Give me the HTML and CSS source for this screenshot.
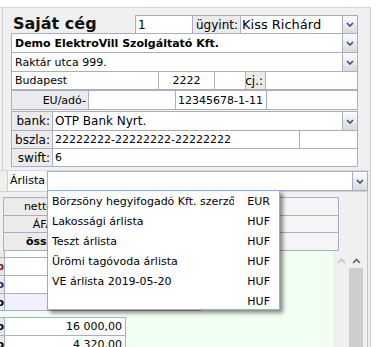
FILE: index.html
```html
<!DOCTYPE html>
<html lang="hu">

<head>
    <meta charset="UTF-8">
    <meta name="viewport" content="width=device-width, initial-scale=1.0">
    <title>Saját cég</title>
    <link rel="stylesheet" href="styles.css">
</head>
<body>
    <div class="app">
        <div class="partner">
            <div class="row h19">
                <div class="title">Saját cég</div>
                <div class="cell c-no">1</div>
                <div class="cell lbl c-agent-lbl">ügyint:</div>
                <div class="cell c-agent">Kiss Richárd</div>
                <div class="cell drop"><svg class="chev" viewBox="0 0 8 5" width="8" height="5"><path d="M1 1l3 3 3-3"/></svg></div>
            </div>
            <div class="row h20">
                <div class="cell c-line strong">Demo ElektroVill Szolgáltató Kft.</div>
                <div class="cell drop"><svg class="chev" viewBox="0 0 8 5" width="8" height="5"><path d="M1 1l3 3 3-3"/></svg></div>
            </div>
            <div class="row h20">
                <div class="cell c-line">Raktár utca 999.</div>
                <div class="cell drop"><svg class="chev" viewBox="0 0 8 5" width="8" height="5"><path d="M1 1l3 3 3-3"/></svg></div>
            </div>
            <div class="row h19">
                <div class="cell c-city">Budapest</div>
                <div class="cell c-zip">2222</div>
                <div class="cell c-blank"></div>
                <div class="cell lbl c-cj">cj.:</div>
                <div class="cell c-rest"></div>
            </div>
            <div class="row h20 group">
                <div class="cell lbl c-eu">EU/adó-</div>
                <div class="cell c-euno"></div>
                <div class="cell c-tax">12345678-1-11</div>
                <div class="cell c-tax"></div>
            </div>
            <div class="row h20 group spaced">
                <div class="cell lbl c-key">bank:</div>
                <div class="cell c-bank sel">OTP Bank Nyrt.</div>
                <div class="cell drop"><svg class="chev" viewBox="0 0 8 5" width="8" height="5"><path d="M1 1l3 3 3-3"/></svg></div>
            </div>
            <div class="row h19">
                <div class="cell lbl c-key">bszla:</div>
                <div class="cell c-acc">22222222-22222222-22222222</div>
                <div class="cell c-acc2"></div>
            </div>
            <div class="row h19">
                <div class="cell lbl c-key">swift:</div>
                <div class="cell c-swift">6</div>
            </div>
        </div>

        <div class="pricing">
            <div class="pricebar">
                <div class="pb-label">Árlista</div>
                <div class="cell c-list"></div>
                <div class="cell drop"><svg class="chev" viewBox="0 0 8 5" width="8" height="5"><path d="M1 1l3 3 3-3"/></svg></div>
            </div>
            <div class="totals">
                <div class="row h19">
                    <div class="cell lbl t-lbl">netto</div>
                    <div class="cell t-val"></div>
                </div>
                <div class="row h18">
                    <div class="cell lbl t-lbl">ÁFA</div>
                    <div class="cell t-val"></div>
                </div>
                <div class="row h19">
                    <div class="cell lbl t-lbl strong">össz</div>
                    <div class="cell t-val"></div>
                </div>
            </div>
            <div class="items">
                <div class="sheet">
                    <div class="srow partial">
                        <div class="cell s-lbl"></div>
                        <div class="cell s-val"></div>
                    </div>
                    <div class="srow">
                        <div class="cell s-lbl red"><span>b</span></div>
                        <div class="cell s-val"></div>
                    </div>
                    <div class="srow">
                        <div class="cell s-lbl blue"><span>o</span></div>
                        <div class="cell s-val"></div>
                    </div>
                    <div class="srow short marked">
                        <div class="cell s-lbl"><span>o</span></div>
                        <div class="cell s-val"></div>
                    </div>
                    <div class="srow sep">
                        <div class="cell s-lbl"><span>o</span></div>
                        <div class="cell s-val narrow num">16 000,00</div>
                    </div>
                    <div class="srow">
                        <div class="cell s-lbl"><span>o</span></div>
                        <div class="cell s-val narrow num">4 320,00</div>
                    </div>
                </div>
                <div class="vscroll">
                    <svg class="up off" viewBox="0 0 9 6" width="9" height="6"><path d="M1 5l3.5-3.5L8 5"/></svg>
                </div>
                <div class="vscroll main">
                    <svg class="up" viewBox="0 0 9 6" width="9" height="6"><path d="M1 5l3.5-3.5L8 5"/></svg>
                    <div class="thumb"></div>
                </div>
            </div>
        </div>

        <ul class="list">
            <li><span class="name">Börzsöny hegyifogadó Kft. szerződés</span><span class="cur">EUR</span></li>
            <li><span class="name">Lakossági árlista</span><span class="cur">HUF</span></li>
            <li><span class="name">Teszt árlista</span><span class="cur">HUF</span></li>
            <li><span class="name">Ürömi tagóvoda árlista</span><span class="cur">HUF</span></li>
            <li><span class="name">VE árlista 2019-05-20</span><span class="cur">HUF</span></li>
            <li><span class="name"></span><span class="cur">HUF</span></li>
        </ul>
    </div>
</body>
</html>
```

FILE: styles.css
```css
* {
    box-sizing: border-box;
}

body {
    margin: 0;
    background: #fff;
    font-family: "DejaVu Sans", Verdana, sans-serif;
    font-size: 11px;
    color: #000;
}

.app {
    position: relative;
    width: 371px;
    height: 340px;
    margin-top: 7px;
    border-top: 1px solid #d5d5d5;
    border-right: 1px solid #cdcdcd;
    background: #f0f0f0;
    overflow: hidden;
}

/* partner block */

.partner {
    height: 162px;
    margin-left: 2px;
    padding: 7px 0 0 8px;
    border-left: 1px solid #d0d0d0;
}

.row {
    display: flex;
}

.row + .row {
    margin-top: -1px;
}

.row.group {
    margin-top: 0;
}

.row.spaced {
    margin-top: 1px;
}

.row > * + * {
    margin-left: -1px;
}

.h18 { height: 18px; }
.h19 { height: 19px; }
.h20 { height: 20px; }

.title {
    width: 125px;
    padding-left: 2px;
    font-size: 16px;
    font-weight: bold;
    line-height: 18px;
    color: #111;
    white-space: nowrap;
}

.cell {
    display: flex;
    align-items: center;
    flex: none;
    height: 100%;
    padding: 0 2px;
    border: 1px solid #a9adc6;
    background: #fff;
    white-space: nowrap;
    overflow: hidden;
}

.lbl {
    justify-content: flex-end;
    background: #ebebeb;
    font-size: 12px;
}

.strong {
    font-weight: bold;
}

.drop {
    width: 16px;
    justify-content: center;
    padding: 0;
    background: linear-gradient(#fdfdfd, #dadada);
}

.chev path {
    fill: none;
    stroke: #2f5597;
    stroke-width: 1.7;
}

.c-no { width: 58px; font-size: 12px; }
.c-agent-lbl { width: 49px; }
.c-agent { width: 103px; font-size: 13px; padding-left: 1px; }
.c-line { width: 332px; padding-left: 3px; }
.c-city { width: 148px; padding-left: 3px; }
.c-zip { width: 57px; justify-content: center; }
.c-blank { width: 32px; }
.c-cj { width: 21px; }
.c-rest { width: 93px; }
.c-eu { width: 78px; font-size: 11px; }
.c-euno { width: 88px; }
.c-tax { width: 92px; }
.c-key { width: 42px; }
.c-bank { width: 291px; }
.c-acc { width: 248px; }
.c-acc2 { width: 59px; }
.c-swift { width: 306px; }

.sel {
    font-size: 12px;
}

/* price list block */

.pricing {
    border-top: 1px solid #d8d8d8;
}

.pricebar {
    display: flex;
    height: 20px;
    padding-left: 7px;
}

.pb-label {
    width: 40px;
    padding: 3px 0 0 2px;
    border-left: 1px solid #cfcfcf;
    background: #fafafa;
}

.c-list {
    width: 306px;
}

.pricebar .drop {
    margin-left: -1px;
}

.totals {
    width: 368px;
    height: 60px;
    padding-top: 5px;
    border-top: 1px solid #cfcfd6;
    border-right: 1px solid #c4c4c4;
}

.t-lbl {
    width: 54px;
    margin-left: 3px;
    padding-right: 3px;
    font-size: 11px;
}

.t-val {
    width: 283px;
    background: #f5f5f5;
}

.items {
    display: flex;
    width: 368px;
    height: 96px;
    border-right: 1px solid #c4c4c4;
}

.sheet {
    width: 333px;
    background: #f0fff0;
    overflow: hidden;
}

.srow {
    display: flex;
    height: 19px;
    margin-top: -1px;
}

.srow > * + * {
    margin-left: -1px;
}

.srow.partial {
    height: 7px;
    margin-top: 0;
}

.srow.partial .cell {
    border-top: 0;
}

.srow.short {
    height: 18px;
}

.srow.sep {
    margin-top: 6px;
}

.s-lbl {
    width: 5px;
    justify-content: flex-end;
    padding: 0;
    border-left: 0;
    background: #e8e8e8;
    font-weight: bold;
}

.s-lbl span {
    flex: none;
}

.red { color: #8b2020; }
.blue { color: #26267a; }

.s-val {
    width: 197px;
}

.s-val.narrow {
    width: 122px;
}

.marked .s-val {
    background: #f0f0ff;
}

.num {
    justify-content: flex-end;
    padding-right: 3px;
}

.vscroll {
    display: flex;
    flex-direction: column;
    align-items: center;
    width: 16px;
    padding-top: 7px;
    background: #f0f0f0;
}

.vscroll.main {
    width: 18px;
    align-items: flex-start;
    padding-right: 4px;
}

.up {
    flex: none;
}

.vscroll.main .up {
    margin-left: 3px;
}

.up path {
    fill: none;
    stroke: #606060;
    stroke-width: 1.6;
}

.up.off path {
    stroke: #c4c4c4;
}

.thumb {
    width: 14px;
    flex: 1;
    margin-top: 4px;
    background: #cdcdcd;
}

/* open price list */

.list {
    position: absolute;
    left: 47px;
    top: 182px;
    width: 233px;
    height: 120px;
    margin: 0;
    padding: 0;
    list-style: none;
    background: #fff;
    border: 1px solid #8fb0dc;
    box-shadow: 3px 3px 4px rgba(0, 0, 0, 0.45);
    overflow: hidden;
}

.list li {
    display: flex;
    align-items: center;
    height: 20px;
    padding: 0 9px 0 4px;
    white-space: nowrap;
}

.list .name {
    flex: none;
    width: 182px;
    overflow: hidden;
}

.list .cur {
    flex: 1;
    text-align: right;
}
```
